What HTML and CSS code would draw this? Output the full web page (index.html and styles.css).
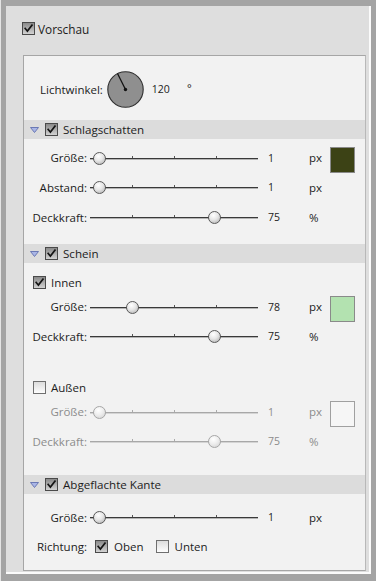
FILE: index.html
```html
<!DOCTYPE html>
<html lang="de">
<head>
<meta charset="utf-8">
<title>Effekte</title>
<link rel="stylesheet" href="styles.css">
</head>
<body>
<div class="frame">
  <div class="dialog">
    <div class="preview">
      <span class="cb checked"><svg viewBox="0 0 13 13"><path d="M2.6 6.4 L5.2 9.6 L10.6 2.6" /></svg></span>
      <span class="preview-text">Vorschau</span>
    </div>
    <div class="panel">
      <div class="angle-row">
        <span class="angle-label">Lichtwinkel:</span>
        <svg class="dial" viewBox="0 0 37 37">
          <circle cx="18.5" cy="18.5" r="17.7" fill="#8f8f8f" stroke="#2e2e2e" stroke-width="1.1"/>
          <line x1="18.5" y1="18.5" x2="10.5" y2="2.5" stroke="#111" stroke-width="1.3"/>
          <circle cx="18.5" cy="18.5" r="1.7" fill="#111"/>
        </svg>
        <span class="angle-value">120</span>
        <span class="deg">°</span>
      </div>

      <div class="sec-head sec-first">
        <svg class="tri" viewBox="0 0 9 6"><polygon points="0.5,0.5 8.5,0.5 4.5,5.5" /></svg>
        <span class="cb checked"><svg viewBox="0 0 13 13"><path d="M2.6 6.4 L5.2 9.6 L10.6 2.6" /></svg></span>
        <span class="sec-title">Schlagschatten</span>
      </div>
      <div class="rows rows-top">
        <div class="row">
          <span class="lbl">Größe:</span>
          <div class="slider"><i class="tick t1"></i><i class="tick t2"></i><i class="tick t3"></i><span class="thumb" style="left:5.4%"></span></div>
          <span class="val">1</span><span class="unit">px</span>
          <span class="swatch swatch-olive"></span>
        </div>
        <div class="row">
          <span class="lbl">Abstand:</span>
          <div class="slider"><i class="tick t1"></i><i class="tick t2"></i><i class="tick t3"></i><span class="thumb" style="left:5.4%"></span></div>
          <span class="val">1</span><span class="unit">px</span>
        </div>
        <div class="row">
          <span class="lbl">Deckkraft:</span>
          <div class="slider"><i class="tick t1"></i><i class="tick t2"></i><i class="tick t3"></i><span class="thumb" style="left:73.6%"></span></div>
          <span class="val">75</span><span class="unit">%</span>
        </div>
      </div>

      <div class="sec-head sec-glow">
        <svg class="tri" viewBox="0 0 9 6"><polygon points="0.5,0.5 8.5,0.5 4.5,5.5" /></svg>
        <span class="cb checked"><svg viewBox="0 0 13 13"><path d="M2.6 6.4 L5.2 9.6 L10.6 2.6" /></svg></span>
        <span class="sec-title">Schein</span>
      </div>
      <div class="sub sub-inner">
        <span class="cb checked"><svg viewBox="0 0 13 13"><path d="M2.6 6.4 L5.2 9.6 L10.6 2.6" /></svg></span>
        <span class="sub-title">Innen</span>
      </div>
      <div class="rows">
        <div class="row">
          <span class="lbl">Größe:</span>
          <div class="slider"><i class="tick t1"></i><i class="tick t2"></i><i class="tick t3"></i><span class="thumb" style="left:25.1%"></span></div>
          <span class="val">78</span><span class="unit">px</span>
          <span class="swatch swatch-green"></span>
        </div>
        <div class="row">
          <span class="lbl">Deckkraft:</span>
          <div class="slider"><i class="tick t1"></i><i class="tick t2"></i><i class="tick t3"></i><span class="thumb" style="left:73.6%"></span></div>
          <span class="val">75</span><span class="unit">%</span>
        </div>
      </div>
      <div class="sub sub-outer">
        <span class="cb"></span>
        <span class="sub-title">Außen</span>
      </div>
      <div class="rows disabled">
        <div class="row">
          <span class="lbl">Größe:</span>
          <div class="slider"><i class="tick t1"></i><i class="tick t2"></i><i class="tick t3"></i><span class="thumb" style="left:5.4%"></span></div>
          <span class="val">1</span><span class="unit">px</span>
          <span class="swatch swatch-empty"></span>
        </div>
        <div class="row">
          <span class="lbl">Deckkraft:</span>
          <div class="slider"><i class="tick t1"></i><i class="tick t2"></i><i class="tick t3"></i><span class="thumb" style="left:73.6%"></span></div>
          <span class="val">75</span><span class="unit">%</span>
        </div>
      </div>

      <div class="sec-head sec-bevel">
        <svg class="tri" viewBox="0 0 9 6"><polygon points="0.5,0.5 8.5,0.5 4.5,5.5" /></svg>
        <span class="cb checked"><svg viewBox="0 0 13 13"><path d="M2.6 6.4 L5.2 9.6 L10.6 2.6" /></svg></span>
        <span class="sec-title">Abgeflachte Kante</span>
      </div>
      <div class="rows rows-bevel">
        <div class="row">
          <span class="lbl">Größe:</span>
          <div class="slider"><i class="tick t1"></i><i class="tick t2"></i><i class="tick t3"></i><span class="thumb" style="left:5.4%"></span></div>
          <span class="val">1</span><span class="unit">px</span>
        </div>
        <div class="row row-dir">
          <span class="lbl">Richtung:</span>
          <div class="dir-options">
            <span class="cb checked"><svg viewBox="0 0 13 13"><path d="M2.6 6.4 L5.2 9.6 L10.6 2.6" /></svg></span>
            <span class="opt">Oben</span>
            <span class="cb"></span>
            <span class="opt">Unten</span>
          </div>
        </div>
      </div>
    </div>
  </div>
</div>
</body>
</html>
```

FILE: styles.css
```css
html, body {
  margin: 0;
  padding: 0;
}

body {
  width: 376px;
  height: 581px;
  overflow: hidden;
  font-family: "Open Sans", "Noto Sans", "DejaVu Sans", sans-serif;
  font-size: 11.5px;
  color: #1c1c1c;
}

.frame {
  box-sizing: border-box;
  height: 581px;
  background: #a4a4a4;
  border-left: 1px solid #e4e4e4;
  padding: 6px 5px 7px 5px;
  display: flex;
}

.dialog {
  flex: 1;
  display: flex;
  flex-direction: column;
  background: #dedede;
  border-right: 2px solid #fbfbfb;
  border-bottom: 2px solid #fbfbfb;
  padding: 16px 3px 1px 17px;
}

/* checkbox */
.cb {
  box-sizing: border-box;
  width: 13px;
  height: 13px;
  flex: none;
  border: 1px solid #6f6f6f;
  background: linear-gradient(#dcdcdc, #fdfdfd);
  display: inline-flex;
}

.cb.checked {
  border-color: #4a4a4a;
  background: linear-gradient(#8a8a8a, #d2d2d2);
}

.cb svg {
  width: 11px;
  height: 11px;
  fill: none;
  stroke: #141414;
  stroke-width: 2;
  stroke-linecap: square;
}

.preview {
  display: flex;
  align-items: center;
  height: 13px;
  margin-left: -1px;
}

.preview-text {
  margin-left: 3px;
  font-size: 11.8px;
}

.panel {
  flex: 1;
  margin-top: 20px;
  background: #f2f2f2;
  border: 1px solid #a6a6a6;
  border-right-color: #b8b8b8;
}

/* angle row */
.angle-row {
  display: flex;
  align-items: center;
  height: 36px;
  margin-top: 15px;
  padding-left: 16px;
}

.dial {
  width: 37px;
  height: 37px;
  margin-left: 4px;
}

.angle-value {
  margin-left: 8px;
  font-size: 10.5px;
}

.deg {
  margin-left: 17px;
  font-size: 11px;
  margin-top: -4px;
}

/* section header */
.sec-head {
  display: flex;
  align-items: center;
  height: 19px;
  background: #dcdcdc;
  padding-left: 6px;
}

.sec-first { margin-top: 13px; }
.sec-glow { margin-top: 12px; }
.sec-bevel { margin-top: 19px; }

.tri {
  width: 9px;
  height: 6px;
  margin-right: 6px;
}

.tri polygon {
  fill: #aab6e6;
  stroke: #6b79b4;
  stroke-width: 1;
}

.sec-title {
  margin-left: 5px;
  font-size: 11.6px;
}

/* sub checkbox rows */
.sub {
  display: flex;
  align-items: center;
  height: 18px;
  padding-left: 9px;
}

.sub-inner { margin-top: 10px; }
.sub-outer { margin-top: 27px; }

.sub-title { margin-left: 5px; }

/* slider rows */
.rows-top { margin-top: 3px; }
.rows-bevel { margin-top: 8px; }

.row {
  display: grid;
  grid-template-columns: 66px 178px 41px 21px 25px;
  align-items: center;
  height: 30px;
}

.lbl {
  text-align: right;
  padding-right: 3px;
}

.slider {
  position: relative;
  width: 168px;
  height: 14px;
}

.slider::before {
  content: "";
  position: absolute;
  left: 0;
  right: 0;
  top: 7px;
  height: 1px;
  background: #3a3a3a;
  box-shadow: 0 1px 0 #b4b4b4;
}

.tick {
  position: absolute;
  top: 5px;
  width: 1px;
  height: 2px;
  background: #555;
}

.t1 { left: 25%; }
.t2 { left: 50%; }
.t3 { left: 75%; }

.thumb {
  position: absolute;
  top: 1px;
  width: 13px;
  height: 13px;
  box-sizing: border-box;
  margin-left: -6px;
  border-radius: 50%;
  border: 1px solid #5a5a5a;
  background: radial-gradient(circle at 40% 30%, #ffffff 0%, #e6e6e6 45%, #a9a9a9 100%);
}

.val {
  font-size: 10.5px;
}

.unit {
  font-size: 11.5px;
}

.swatch {
  align-self: start;
  margin-top: 5px;
  box-sizing: border-box;
  width: 25px;
  height: 26px;
  border: 1px solid #8a8a8a;
}

.swatch-olive { background: #3c4215; }
.swatch-green { background: #b3e2b0; }
.swatch-empty { background: #f6f6f6; border-color: #a0a0a0; }

/* disabled */
.disabled .lbl,
.disabled .val,
.disabled .unit {
  color: #8c8c8c;
}

.disabled .slider::before {
  background: #a8a8a8;
  box-shadow: 0 1px 0 #d4d4d4;
}

.disabled .tick { background: #aaa; }

.disabled .thumb {
  border-color: #a6a6a6;
  background: radial-gradient(circle at 40% 30%, #ffffff 0%, #eeeeee 45%, #cfcfcf 100%);
}

/* Richtung */
.row-dir {
  height: 28px;
}

.dir-options {
  display: flex;
  align-items: center;
  margin-left: 5px;
}

.opt {
  margin-left: 6px;
  margin-right: 12px;
}
```
